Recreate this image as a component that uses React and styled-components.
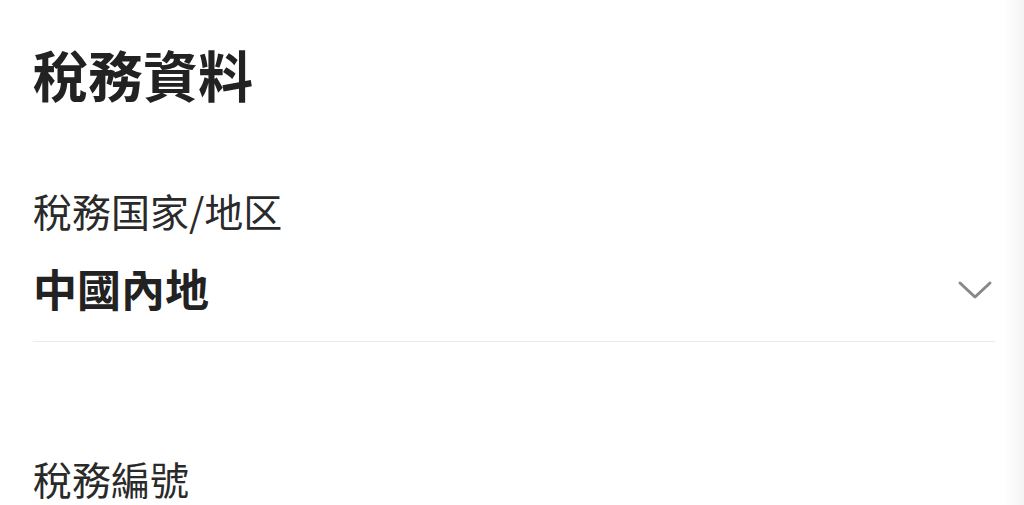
import React from "react";
import styled, { createGlobalStyle } from "styled-components";

const Global = createGlobalStyle`
  html, body { margin: 0; padding: 0; background: #fff; }
  body {
    font-family: "Noto Sans CJK TC", "Noto Sans CJK SC", "Noto Sans", sans-serif;
    color: #222;
    overflow: hidden;
  }
`;

const Page = styled.div`
  width: 1024px;
  height: 505px;
  box-sizing: border-box;
  padding: 0 29px 0 33px;
  background: linear-gradient(to right, #fff 0, #fff 1004px, #f4f4f4 1024px);
  overflow: hidden;
`;

const Title = styled.h1`
  margin: 0;
  padding-top: 31px;
  font-size: 55px;
  line-height: 84px;
  font-weight: 700;
  color: #222;
`;

const Field = styled.div`
  display: flex;
  flex-direction: column;
  margin-top: ${(p) => p.$top}px;
  border-bottom: ${(p) => (p.$line ? "1px solid #ebebeb" : "none")};
`;

const Label = styled.div`
  font-size: 39px;
  line-height: 56px;
  font-weight: 400;
  color: #2a2a2a;
`;

const SelectRow = styled.div`
  display: flex;
  align-items: center;
  justify-content: space-between;
  padding: 20px 0 23px;
`;

const Value = styled.div`
  font-size: 44px;
  line-height: 60px;
  font-weight: 700;
  color: #222;
`;

const Chevron = styled.svg`
  width: 36px;
  height: 24px;
  margin: 4px 2px 0 0;
`;

export default function App() {
  return (
    <>
      <Global />
      <Page>
        <Title>稅務資料</Title>
        <Field $top={67} $line>
          <Label>稅務国家/地区</Label>
          <SelectRow>
            <Value>中國內地</Value>
            <Chevron viewBox="0 0 36 24">
              <polyline
                points="3,5 18,19 33,5"
                fill="none"
                stroke="#888"
                strokeWidth="3"
                strokeLinecap="round"
                strokeLinejoin="round"
              />
            </Chevron>
          </SelectRow>
        </Field>
        <Field $top={108}>
          <Label>稅務編號</Label>
        </Field>
      </Page>
    </>
  );
}
